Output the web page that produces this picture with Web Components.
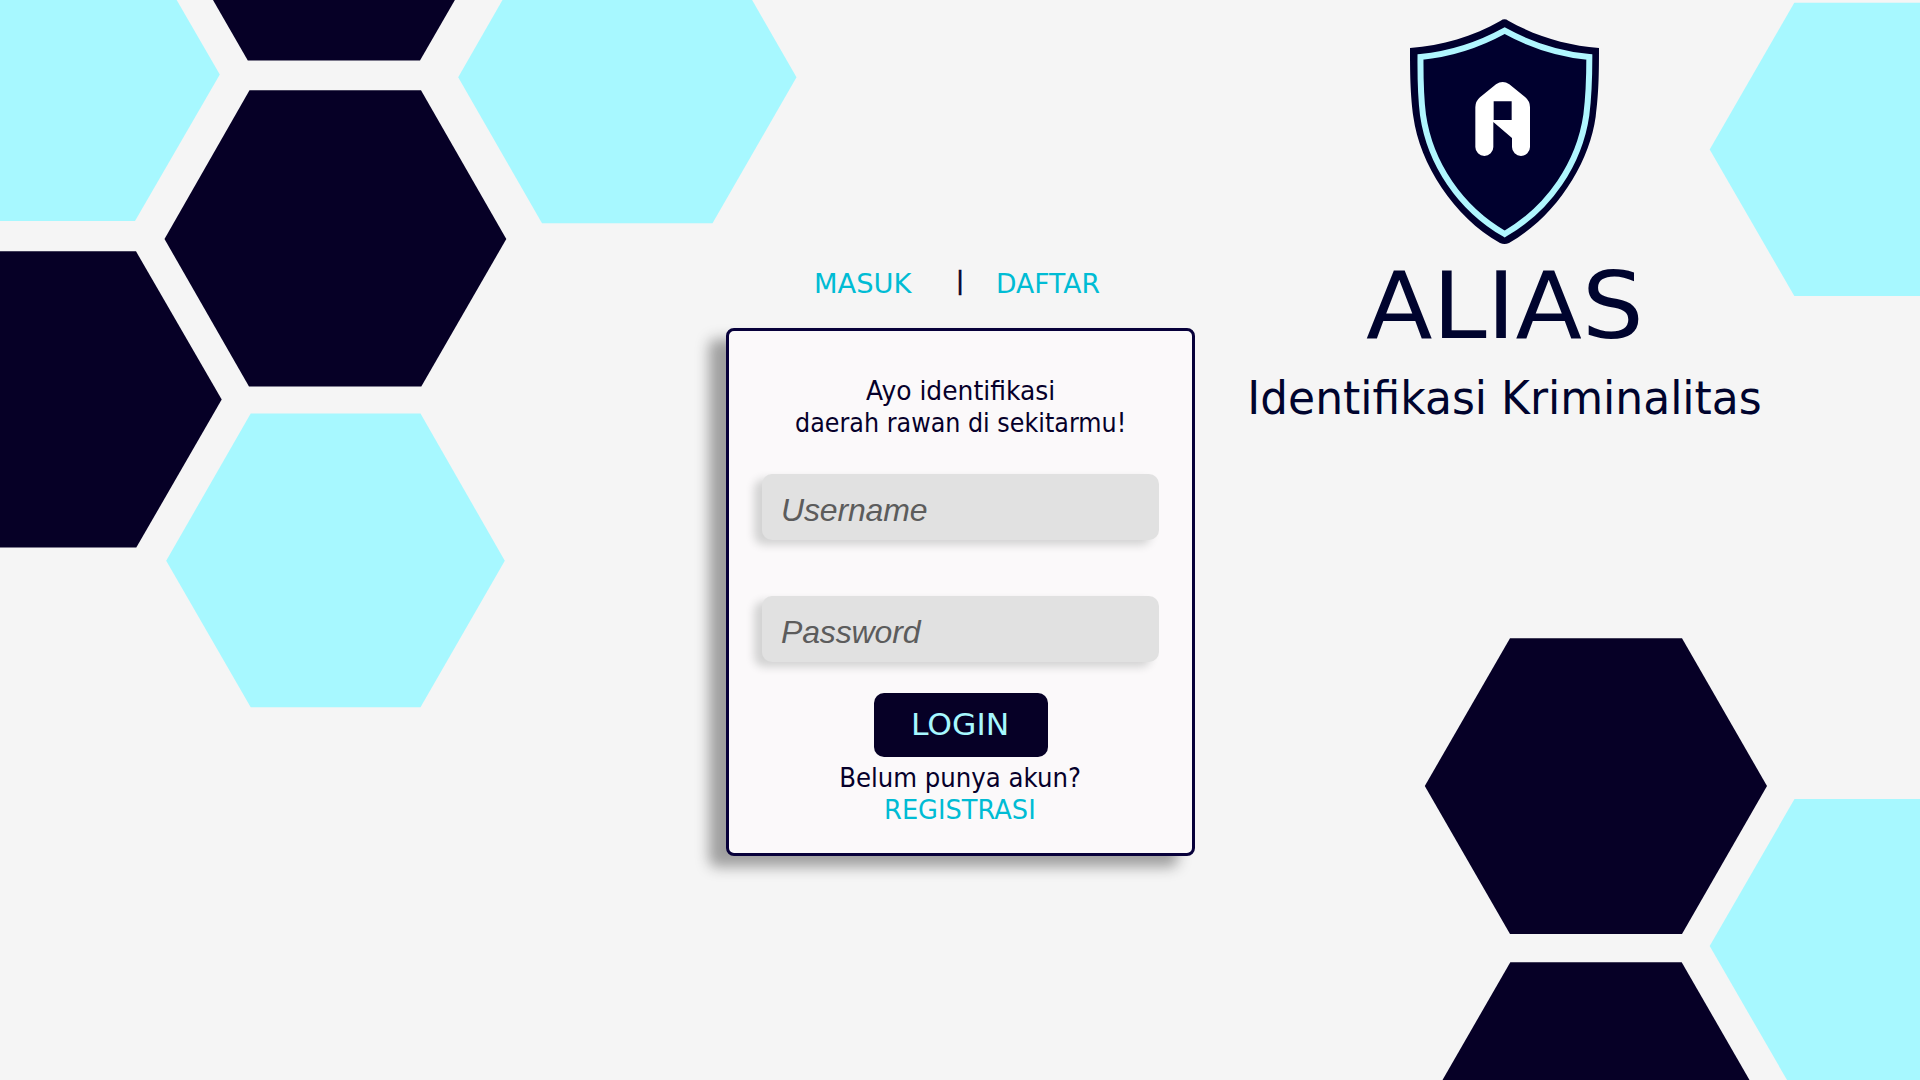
<!DOCTYPE html>
<html lang="id">
<head>
<meta charset="utf-8">
<title>ALIAS - Login</title>
<style>
html,body{margin:0;height:100%;overflow:hidden;background:#f5f5f5}
body{font-family:"DejaVu Sans",sans-serif;color:#06002a}
</style>
</head>
<body>
<login-page></login-page>
<script>
const mount = (el, html) => { el.attachShadow({mode:'open'}).innerHTML = html; };

// A single line of text whose ink is fitted to a given width.
class FitText extends HTMLElement {
  connectedCallback() {
    const w = +this.getAttribute('w'), s = +this.getAttribute('size'), lh = this.getAttribute('lh');
    const ctx = document.createElement('canvas').getContext('2d');
    ctx.font = s + 'px "DejaVu Sans"';
    const m = ctx.measureText(this.textContent.trim());
    const k = w / (m.actualBoundingBoxLeft + m.actualBoundingBoxRight);
    mount(this, `<style>
      :host{display:block;flex:none;width:${w}px;height:${lh}px;font-size:${s}px;line-height:${lh}px;white-space:nowrap}
      span{display:inline-block;transform-origin:0 50%;transform:translateX(${m.actualBoundingBoxLeft * k}px) scaleX(${k})}
    </style><span><slot></slot></span>`);
  }
}
customElements.define('fit-text', FitText);

class HexBackdrop extends HTMLElement {
  connectedCallback() {
    mount(this, `<style>:host{position:absolute;inset:0;z-index:-1}svg{display:block}.c{fill:#a7f8ff}.d{fill:#060026}</style>
    <svg width="1920" height="1080" viewBox="0 0 1920 1080" aria-hidden="true">
      <polygon class="c" points="-34,-72 135,-72 219.8,74.5 135,221 -34,221"/>
      <polygon class="d" points="163,-87 247.8,60.6 420,60.6 505,-87"/>
      <polygon class="c" points="458.2,77.3 542,-69 712.5,-69 796.5,77.3 712.5,223.2 542,223.2"/>
      <polygon class="d" points="164.5,239 249.5,90.3 421,90.3 506.3,239 421.3,386.6 249,386.6"/>
      <polygon class="d" points="-36,251.3 136,251.3 221.7,399.5 136.3,547.6 -36,547.6"/>
      <polygon class="c" points="166.2,560.7 250.7,413.6 420.5,413.6 504.8,560.7 420.5,707.2 250.7,707.2"/>
      <polygon class="c" points="1709.7,149.5 1794.3,2.8 1964,2.8 1964,296 1794.3,296"/>
      <polygon class="d" points="1424.8,786 1510,638.2 1682,638.2 1767,786 1682,933.9 1510,933.9"/>
      <polygon class="d" points="1425,1110.4 1510.3,962.2 1681.7,962.2 1767,1110.4"/>
      <polygon class="c" points="1709.7,946 1794.5,799 1964,799 1964,1093 1794.5,1093"/>
    </svg>`);
  }
}
customElements.define('hex-backdrop', HexBackdrop);

class AuthTabs extends HTMLElement {
  connectedCallback() {
    mount(this, `<style>
      :host{display:flex;align-items:flex-start;padding:264px 0 0 90px;height:64px}
      a{color:#00bcd4}
      .bar{margin:0 35.5px 0 47px;-webkit-text-stroke:.6px}
    </style>
    <a><fit-text size="26.5" w="96" lh="39">MASUK</fit-text></a>
    <fit-text class="bar" size="24" w="3" lh="35">|</fit-text>
    <a><fit-text size="26.5" w="101.5" lh="39">DAFTAR</fit-text></a>`);
  }
}
customElements.define('auth-tabs', AuthTabs);

class TextField extends HTMLElement {
  connectedCallback() {
    mount(this, `<style>
      :host{display:block}
      input{display:block;box-sizing:border-box;width:397px;height:66px;border:0;outline:0;border-radius:10px;
        padding:6px 20px 0 19px;background:#e1e1e1;box-shadow:-8px 5px 8px #d3d3d3;
        font:italic 32px "Liberation Sans",sans-serif;letter-spacing:-.15px;color:#060026}
      input::placeholder{color:#5c5c5c;opacity:1}
    </style><input type="${this.getAttribute('type')}" placeholder="${this.getAttribute('label')}">`);
  }
}
customElements.define('text-field', TextField);

class PrimaryButton extends HTMLElement {
  connectedCallback() {
    mount(this, `<style>
      :host{display:block}
      button{display:flex;justify-content:center;align-items:flex-start;width:174px;height:64px;padding:0;border:0;border-radius:10px;
        background:#060026;color:#a7f8ff;font-family:inherit;text-align:left}
    </style><button><slot></slot></button>`);
  }
}
customElements.define('primary-button', PrimaryButton);

class LoginCard extends HTMLElement {
  connectedCallback() {
    mount(this, `<style>
      :host{display:flex;flex-direction:column;align-items:center;box-sizing:border-box;width:469px;height:528px;
        padding-top:44px;border:3px solid #07003a;border-radius:8px;background:#fbf9fa;box-shadow:-17px 11px 14px #9f9f9f}
      .fields{display:flex;flex-direction:column;gap:56px;margin:35px 0 31px}
      .line{margin-right:1.5px}
      .ask{margin-top:5px}
      a{color:#00bcd4}
    </style>
    <fit-text class="line" size="26.3" w="187" lh="32">Ayo identifikasi</fit-text>
    <fit-text class="line" size="26.3" w="327" lh="32">daerah rawan di sekitarmu!</fit-text>
    <div class="fields">
      <text-field type="text" label="Username"></text-field>
      <text-field type="password" label="Password"></text-field>
    </div>
    <primary-button><fit-text size="31" w="93" lh="62">LOGIN</fit-text></primary-button>
    <fit-text class="ask" size="26.3" w="239" lh="32">Belum punya akun?</fit-text>
    <a class="line"><fit-text size="26.3" w="148" lh="32">REGISTRASI</fit-text></a>`);
  }
}
customElements.define('login-card', LoginCard);

class BrandPanel extends HTMLElement {
  connectedCallback() {
    mount(this, `<style>
      :host{display:flex;flex-direction:column;align-items:center;width:509px;padding-top:19px;color:#00042e}
      svg{display:block;margin-right:2px}
      .name{margin:17px 7px 23px 0}
    </style>
    <svg width="189" height="225" viewBox="60 57 567 675" role="img" aria-label="ALIAS">
      <path fill="#00002e" d="M332 62Q343.500 54 355 62C440 110 530 136 627 144C627 240 625 290 617 350C598 490 497 650 357 729Q343.500 735 330 729C190 650 89 490 70 350C62 290 60 240 60 144C157 136 247 110 332 62Z"/>
      <path fill="none" stroke="#b0f6ff" stroke-width="18" d="M344 92C426 137 512 163 598 171C598 240 596 290 589 345C568 490 478 625 344 702C210 625 120 490 99 345C92 290 91 240 91.500 171C176 163 262 137 344 92Z"/>
      <path fill="#fff" fill-rule="evenodd" d="M256 322Q256 304 270 292L318 253Q338 239 358 253L406 292Q420 304 420 322V441a27 27 0 0 1-54 0V414L310 366V441a27 27 0 0 1-54 0ZM311 304V360H365V304Z"/>
    </svg>
    <fit-text class="name" size="92" w="273" lh="92">ALIAS</fit-text>
    <fit-text size="45.7" w="509" lh="46">Identifikasi Kriminalitas</fit-text>`);
  }
}
customElements.define('brand-panel', BrandPanel);

class LoginPage extends HTMLElement {
  connectedCallback() {
    mount(this, `<style>
      :host{display:flex;position:relative;z-index:0;box-sizing:border-box;width:1920px;height:1080px;padding-left:726px;
        gap:56px;align-items:flex-start;overflow:hidden;background:#f5f5f5}
    </style>
    <hex-backdrop></hex-backdrop>
    <main><auth-tabs></auth-tabs><login-card></login-card></main>
    <brand-panel></brand-panel>`);
  }
}
customElements.define('login-page', LoginPage);
</script>
</body>
</html>
